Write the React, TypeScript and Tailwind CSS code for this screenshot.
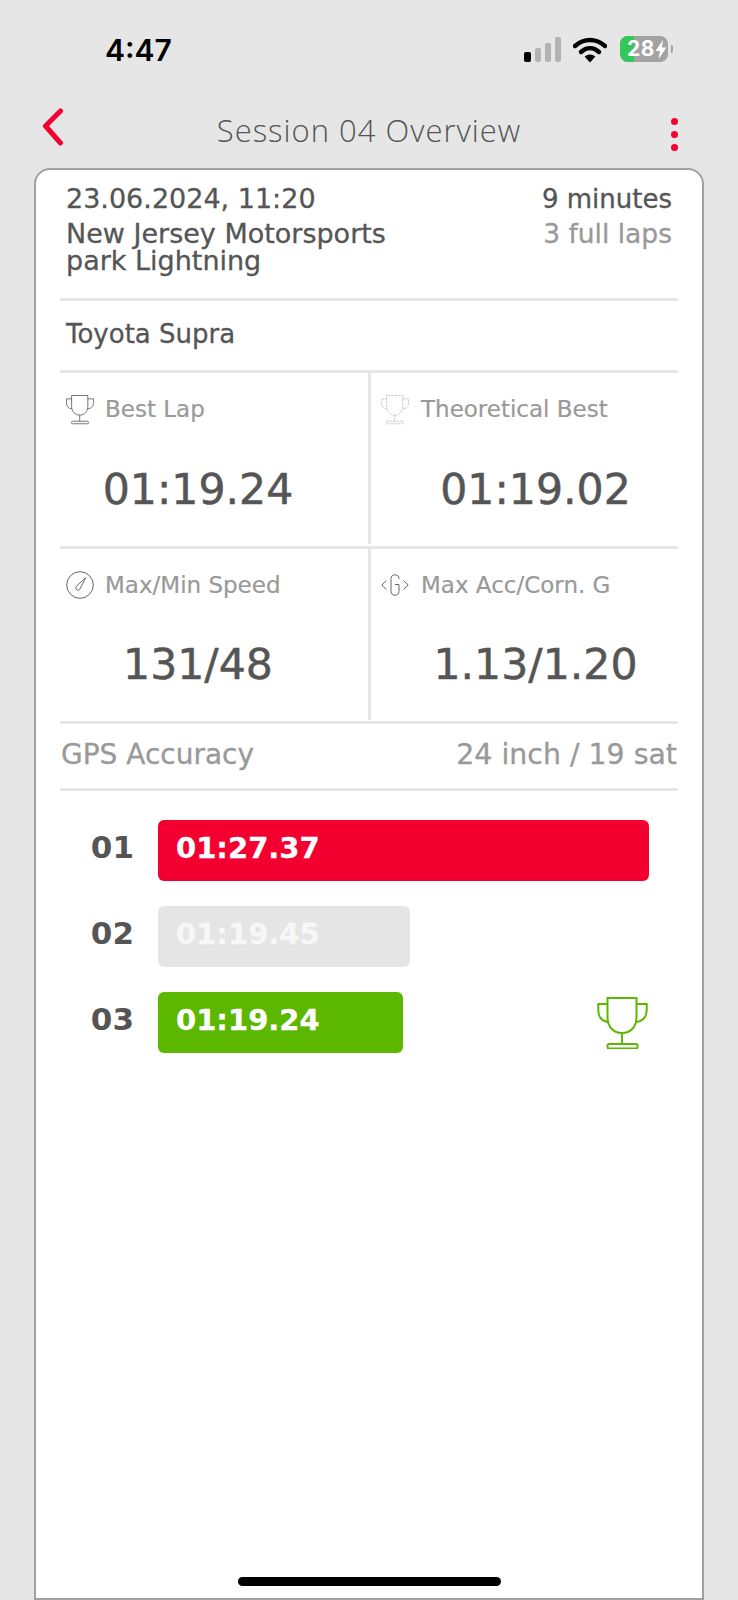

const Trophy = ({ className, dotted, sw = 1.2 }: { className: string; dotted?: boolean; sw?: number }) => (
  <svg viewBox="0 0 50 52" className={className} fill="none" stroke="currentColor" strokeWidth={sw} strokeDasharray={dotted ? "0.9 1.6" : undefined}>
    <path d="M10 1 H39 V20 C39 30 33 36 24.5 36 C16 36 10 30 10 20 Z" />
    <path d="M10 7 H0.8 V13 C0.8 20 4 24 10.5 25" />
    <path d="M39 7 H49.2 V13 C49.2 20 46 24 38.5 25" />
    <path d="M24.5 36 V47" />
    <rect x="10" y="47" width="30" height="4.5" rx="1.5" />
  </svg>
);

const Gauge = () => (
  <svg viewBox="0 0 28 28" className="w-[28px] h-[28px] shrink-0 text-[#666]" fill="none" stroke="currentColor" strokeWidth="1">
    <circle cx="14" cy="14" r="13.3" />
    <path d="M19.5 7 L11 14.5 C9.5 16 9.5 18 10.8 18.8 C12.2 19.6 13.6 19 14.4 17.2 Z" />
  </svg>
);

const GIcon = () => (
  <svg viewBox="0 0 28 22" className="w-[28px] h-[22px] shrink-0 text-[#666]" fill="none" stroke="currentColor" strokeWidth="1">
    <path d="M5.5 6.5 L0.8 11 L5.5 15.5" />
    <path d="M22.5 6.5 L27.2 11 L22.5 15.5" />
    <path d="M18 5 V4.5 C18 2.3 16.4 0.8 14 0.8 C11.6 0.8 10 2.3 10 4.5 V17.5 C10 19.7 11.6 21.2 14 21.2 C16.4 21.2 18 19.7 18 17.5 V10.5 H14" />
  </svg>
);

const Cell = ({ icon, label, value, right, second }: { icon: React.ReactNode; label: string; value: string; right?: boolean; second?: boolean }) => (
  <div className={`flex-1 h-[171px] flex flex-col ${right ? "border-l-[3px] border-[#E6E6E6] pl-[10px]" : "pl-[6px] w-[308px] flex-none"}`}>
    <div className={`flex items-center h-[30px] text-[23px] leading-[30px] text-[#999] [-webkit-text-stroke:0.2px] mt-[21px] ${right ? "gap-[12px]" : "gap-[11px]"}`}>
      {icon}
      <span>{label}</span>
    </div>
    <div className={`text-[42.6px] leading-[50px] text-[#555] text-center [-webkit-text-stroke:0.5px] ${second ? "mt-[39px]" : "mt-[40px]"} ${right ? "pl-[12px]" : "pr-[38px]"}`}>{value}</div>
  </div>
);

const Lap = ({ n, t, w, bg, fg, trophy }: { n: string; t: string; w: string; bg: string; fg: string; trophy?: boolean }) => (
  <div className="flex items-center h-[62px] mb-[24px]">
    <div className="w-[98px] text-[31px] font-bold text-[#555] leading-[62px] pb-[6px] text-right pr-[24px] shrink-0">{n}</div>
    <div className={`${w} ${bg} ${fg} h-[61px] rounded-[6px] pl-[18px] text-[29px] font-bold leading-[56px] [-webkit-text-stroke:0.3px]`}>{t}</div>
    {trophy && (
      <div className="ml-auto mr-[30px] mt-[1px]">
        <Trophy className="w-[51px] h-[52px] text-[#5CB700]" sw={2} />
      </div>
    )}
  </div>
);

export default function App() {
  return (
    <div className="relative w-[738px] h-[1600px] overflow-hidden bg-[#E6E6E6] flex flex-col font-['DejaVu_Sans',sans-serif]">
      {/* status bar */}
      <div className="h-[108px] shrink-0 flex items-start pl-[105px] pr-[65px] pt-[34px]">
        <div className="text-[30px] leading-[32px] font-semibold text-black font-['Inter',sans-serif]">4:47</div>
        <div className="ml-auto flex items-start">
          <svg width="38" height="26" viewBox="0 0 38 26" className="mt-[3px]">
            <rect x="1" y="15" width="7" height="10" rx="2" fill="#000" />
            <rect x="12" y="11" width="6" height="14" rx="2" fill="#B3B3B3" />
            <rect x="22" y="6" width="6" height="19" rx="2" fill="#B3B3B3" />
            <rect x="32" y="0" width="6" height="25" rx="2" fill="#B3B3B3" />
          </svg>
          <svg width="34" height="26" viewBox="0 0 34 26" className="ml-[12px] mt-[3px]">
            <path d="M2 9 C11 1 23 1 32 9" fill="none" stroke="#000" strokeWidth="4.4" strokeLinecap="round" />
            <path d="M8 15 C13.5 10 20.5 10 26 15" fill="none" stroke="#000" strokeWidth="4.4" strokeLinecap="round" />
            <path d="M11.6 19.6 L17 25.5 L22.4 19.6 C19 16.9 15 16.9 11.6 19.6 Z" fill="#000" />
          </svg>
          <div className="ml-[13px] flex items-center mt-[2px]">
            <div className="relative w-[48px] h-[26px] rounded-[8px] bg-[#A3A3A3] overflow-hidden">
              <div className="absolute left-0 top-0 bottom-0 w-[14px] bg-[#34C759]" />
              <div className="absolute inset-0 flex items-center pl-[7px] text-white font-['Inter',sans-serif] font-bold text-[21px] leading-[26px] tracking-[0.6px]">
                28
                <svg width="12" height="21" viewBox="0 0 12 19" className="ml-[0px] shrink-0">
                  <path d="M8 0 L0.5 11 H5 L3.5 19 L11.5 7.5 H7 Z" fill="#fff" />
                </svg>
              </div>
            </div>
            <div className="ml-[3px] w-[2px] h-[8px] rounded-r-[2px] bg-[#A3A3A3]" />
          </div>
        </div>
      </div>

      {/* nav */}
      <div className="h-[60px] shrink-0 relative flex items-start justify-center">
        <svg width="22" height="38" viewBox="0 0 22 38" className="absolute left-[42px] top-[0px]" fill="none" stroke="#F30031" strokeWidth="5" strokeLinecap="round" strokeLinejoin="round">
          <path d="M18.5 3 L3.5 18 L18.5 35" />
        </svg>
        <div className="text-[31px] leading-[40px] mt-[2px] text-[#555] font-light font-['Open_Sans',sans-serif] tracking-[1px]">Session 04 Overview</div>
        <div className="absolute left-[671px] top-[10px] flex flex-col gap-[6px]">
          <div className="w-[7px] h-[7px] rounded-full bg-[#F30031]" />
          <div className="w-[7px] h-[7px] rounded-full bg-[#F30031]" />
          <div className="w-[7px] h-[7px] rounded-full bg-[#F30031]" />
        </div>
      </div>

      {/* card */}
      <div className="mx-[34px] flex-1 bg-white border-2 border-[#A0A0A0] rounded-t-[16px] px-[24px] flex flex-col">
        <div className="h-[131px] shrink-0 flex justify-between pl-[6px] pr-[6px] pt-[12px] border-b-[3px] border-[#E6E6E6] text-[#555] [-webkit-text-stroke:0.3px]">
          <div>
            <div className="text-[27px] leading-[32px] translate-y-[1px]">23.06.2024, 11:20</div>
            <div className="text-[27px] leading-[27px] mt-[6px]">New Jersey Motorsports<br />park Lightning</div>
          </div>
          <div className="text-right">
            <div className="text-[26px] leading-[32px] translate-y-[1px]">9 minutes</div>
            <div className="text-[26.5px] leading-[27px] mt-[6px] text-[#999]">3 full laps</div>
          </div>
        </div>
        <div className="h-[72px] shrink-0 flex items-center pl-[6px] pb-[2px] text-[26px] text-[#555] border-b-[3px] border-[#E6E6E6] [-webkit-text-stroke:0.3px]">Toyota Supra</div>
        <div className="flex border-b-[3px] border-[#E6E6E6] h-[176px] shrink-0">
          <Cell icon={<Trophy className="w-[28px] h-[31px] shrink-0 text-[#666]" sw={1.6} />} label="Best Lap" value="01:19.24" />
          <Cell right icon={<Trophy dotted className="w-[28px] h-[31px] shrink-0 text-[#888]" sw={1.6} />} label="Theoretical Best" value="01:19.02" />
        </div>
        <div className="flex border-b-[3px] border-[#E6E6E6] h-[175px] shrink-0">
          <Cell second icon={<Gauge />} label="Max/Min Speed" value="131/48" />
          <Cell second right icon={<GIcon />} label="Max Acc/Corn. G" value="1.13/1.20" />
        </div>
        <div className="h-[67px] shrink-0 flex items-center justify-between px-[1px] pb-[2px] text-[28px] text-[#999] border-b-[3px] border-[#E6E6E6] [-webkit-text-stroke:0.3px]">
          <span>GPS Accuracy</span>
          <span className="text-[28.4px]">24 inch / 19 sat</span>
        </div>
        <div className="mt-[28px]">
          <Lap n="01" t="01:27.37" w="w-[491px]" bg="bg-[#F30031]" fg="text-white" />
          <Lap n="02" t="01:19.45" w="w-[252px]" bg="bg-[#E5E5E5]" fg="text-[#F7F7F7]" />
          <Lap n="03" t="01:19.24" w="w-[245px]" bg="bg-[#5CB700]" fg="text-white" trophy />
        </div>
      </div>

      {/* home indicator */}
      <div className="absolute left-[238px] top-[1577px] w-[263px] h-[9px] rounded-full bg-black" />
    </div>
  );
}
